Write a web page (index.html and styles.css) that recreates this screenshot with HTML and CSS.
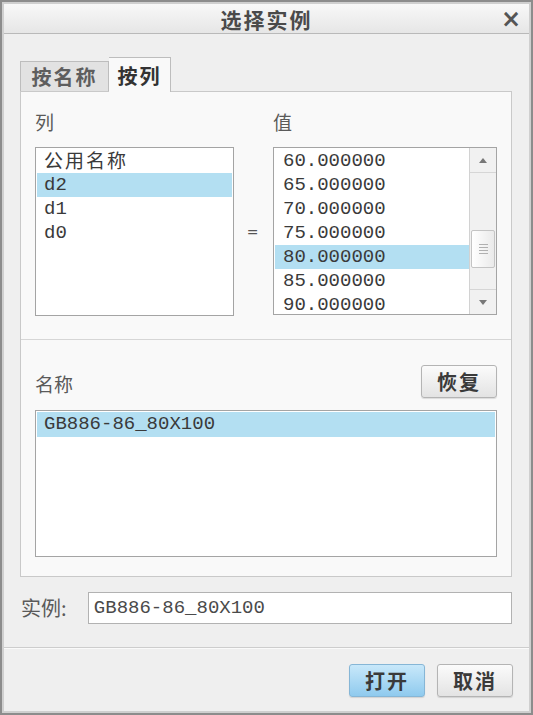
FILE: index.html
```html
<!DOCTYPE html>
<html lang="zh-CN">
<head>
  <meta charset="UTF-8" />
  <title>选择实例</title>
  <link rel="stylesheet" href="styles.css">
</head>
<body>
  <div class="window">
    <div class="titlebar">
      <span class="title">选择实例</span>
      <span class="close">×</span>
    </div>

    <div class="content">
      <!-- Tabs -->
      <div class="tabs">
        <div class="tab">按名称</div>
        <div class="tab active">按列</div>
      </div>

      <div class="panel">
        <div class="columns">
          <div class="label">列</div>
          <div></div>
          <div class="label">值</div>

          <div class="list list-cols">
            <div class="row cjk">公用名称</div>
            <div class="row selected">d2</div>
            <div class="row">d1</div>
            <div class="row">d0</div>
          </div>
          <div class="equals">=</div>
          <div class="list list-values">
            <div class="rows">
              <div class="row">60.000000</div>
              <div class="row">65.000000</div>
              <div class="row">70.000000</div>
              <div class="row">75.000000</div>
              <div class="row selected">80.000000</div>
              <div class="row">85.000000</div>
              <div class="row">90.000000</div>
            </div>
            <div class="scrollbar">
              <div class="arrow up"></div>
              <div class="track">
                <div class="thumb"><span></span><span></span><span></span><span></span></div>
              </div>
              <div class="arrow down"></div>
            </div>
          </div>
        </div>

        <div class="names">
          <div class="names-head">
            <div class="label">名称</div>
            <button class="btn">恢复</button>
          </div>
          <div class="list list-names">
            <div class="row selected">GB886-86_80X100</div>
          </div>
        </div>
      </div>

      <div class="instance">
        <span class="label">实例:</span>
        <input type="text" value="GB886-86_80X100" />
      </div>
    </div>

    <div class="footer">
      <button class="btn primary">打开</button>
      <button class="btn">取消</button>
    </div>
  </div>
</body>
</html>
```

FILE: styles.css
```css
* {
  box-sizing: border-box;
  margin: 0;
  padding: 0;
}

body {
  font-family: "Noto Sans CJK SC", "Noto Sans", sans-serif;
  background: #ffffff;
}

.window {
  width: 533px;
  height: 715px;
  display: flex;
  flex-direction: column;
  background: #efefef;
  border: 2px solid #8c8c8c;
  box-shadow: inset 0 0 0 2px #cfcfcf;
  padding: 2px;
}

/* Title bar */
.titlebar {
  height: 30px;
  flex-shrink: 0;
  position: relative;
  display: flex;
  align-items: center;
  justify-content: center;
  background: linear-gradient(#f8f8f8, #e6e6e6);
  border-bottom: 1px solid #b9b9b9;
}

.title {
  font-size: 21px;
  font-weight: bold;
  color: #4a4a4a;
  letter-spacing: 2px;
}

.close {
  position: absolute;
  right: 8px;
  top: 1px;
  font-family: "DejaVu Sans", sans-serif;
  font-size: 24px;
  font-weight: bold;
  color: #555;
}

.content {
  padding: 23px 17px 0 16px;
}

/* Tabs */
.tabs {
  display: flex;
  align-items: flex-end;
  height: 34px;
}

.tab {
  height: 30px;
  width: 89px;
  display: flex;
  align-items: center;
  justify-content: center;
  font-size: 20px;
  font-weight: bold;
  color: #5e5e5e;
  letter-spacing: 2px;
  background: #e2e2e2;
  border: 1px solid #bdbdbd;
  border-bottom: none;
}

.tab.active {
  height: 35px;
  width: 62px;
  margin-bottom: -1px;
  color: #333;
  background: #f9f9f9;
  border-left: none;
  position: relative;
}

.panel {
  background: #f9f9f9;
  border: 1px solid #c9c9c9;
}

.label {
  font-size: 19px;
  line-height: 24px;
  color: #5a5a5a;
}

/* Columns / values */
.columns {
  display: grid;
  grid-template-columns: 199px 39px 224px;
  row-gap: 13px;
  padding: 18px 14px 23px 14px;
  border-bottom: 1px solid #d6d6d6;
}

.list {
  background: #ffffff;
  border: 1px solid #a4a4a4;
  padding: 1px;
  font-family: "Liberation Mono", monospace;
  font-size: 19px;
  color: #3a3a3a;
}

.row {
  height: 24px;
  line-height: 24px;
  padding-left: 7px;
  white-space: nowrap;
}

.row.cjk {
  font-family: "Noto Sans CJK SC", sans-serif;
  font-size: 19px;
  line-height: 22px;
  letter-spacing: 2px;
}

.row.selected {
  background: #b3dff2;
}

.list-cols {
  height: 169px;
}

.equals {
  display: flex;
  align-items: center;
  justify-content: center;
  padding-right: 2px;
  font-family: "DejaVu Sans", sans-serif;
  font-size: 14px;
  color: #555;
}

.list-values {
  height: 168px;
  display: flex;
  overflow: hidden;
}

.list-values .rows {
  flex: 1;
}

.list-values .row {
  padding-left: 8px;
}

.scrollbar {
  width: 27px;
  display: flex;
  flex-direction: column;
  border-left: 1px solid #d2d2d2;
  background: #f1f1f1;
  margin: -1px -1px -1px 0;
}

.arrow {
  height: 25px;
  display: flex;
  align-items: center;
  justify-content: center;
  border-bottom: 1px solid #d6d6d6;
}

.arrow.down {
  border-bottom: none;
  border-top: 1px solid #d6d6d6;
}

.arrow::after {
  content: "";
  border-left: 4px solid transparent;
  border-right: 4px solid transparent;
}

.arrow.up::after {
  border-bottom: 5px solid #777;
}

.arrow.down::after {
  border-top: 5px solid #777;
}

.track {
  flex: 1;
  padding-top: 57px;
}

.thumb {
  height: 38px;
  margin: 0 1px;
  background: linear-gradient(to right, #ffffff, #eaeaea);
  border: 1px solid #c4c4c4;
  border-radius: 2px;
  display: flex;
  flex-direction: column;
  align-items: center;
  justify-content: center;
  gap: 2px;
}

.thumb span {
  width: 9px;
  height: 1px;
  background: #b0b0b0;
}

/* Names */
.names {
  padding: 25px 14px 19px 14px;
}

.names-head {
  display: flex;
  justify-content: space-between;
  align-items: flex-end;
  margin-bottom: 12px;
}

.names-head .label {
  line-height: 28px;
}

.list-names {
  height: 147px;
  width: 462px;
}

.list-names .row {
  height: 25px;
  line-height: 25px;
}

/* Buttons */
.btn {
  width: 76px;
  height: 33px;
  font-family: "Noto Sans CJK SC", sans-serif;
  font-size: 20px;
  font-weight: bold;
  color: #3a3a3a;
  letter-spacing: 2px;
  background: linear-gradient(#fbfbfb, #e3e3e3);
  border: 1px solid #b4b4b4;
  border-radius: 3px;
  box-shadow: 0 1px 1px rgba(0, 0, 0, 0.12);
}

.btn.primary {
  background: linear-gradient(#c8e8fa, #8fcaee);
  border-color: #86b6d6;
}

/* Instance row */
.instance {
  display: flex;
  align-items: center;
  margin-top: 15px;
}

.instance .label {
  width: 68px;
  padding-left: 1px;
  font-size: 20px;
}

.instance input {
  width: 425px;
  height: 32px;
  padding-left: 5px;
  font-family: "Liberation Mono", monospace;
  font-size: 19px;
  color: #4a4a4a;
  background: #fff;
  border: 1px solid #b2b2b2;
  outline: none;
}

.footer {
  margin-top: 23px;
  border-top: 1px solid #cdcdcd;
  box-shadow: inset 0 1px 0 #fafafa;
  display: flex;
  justify-content: flex-end;
  gap: 12px;
  padding: 16px 16px 0 0;
}
```
